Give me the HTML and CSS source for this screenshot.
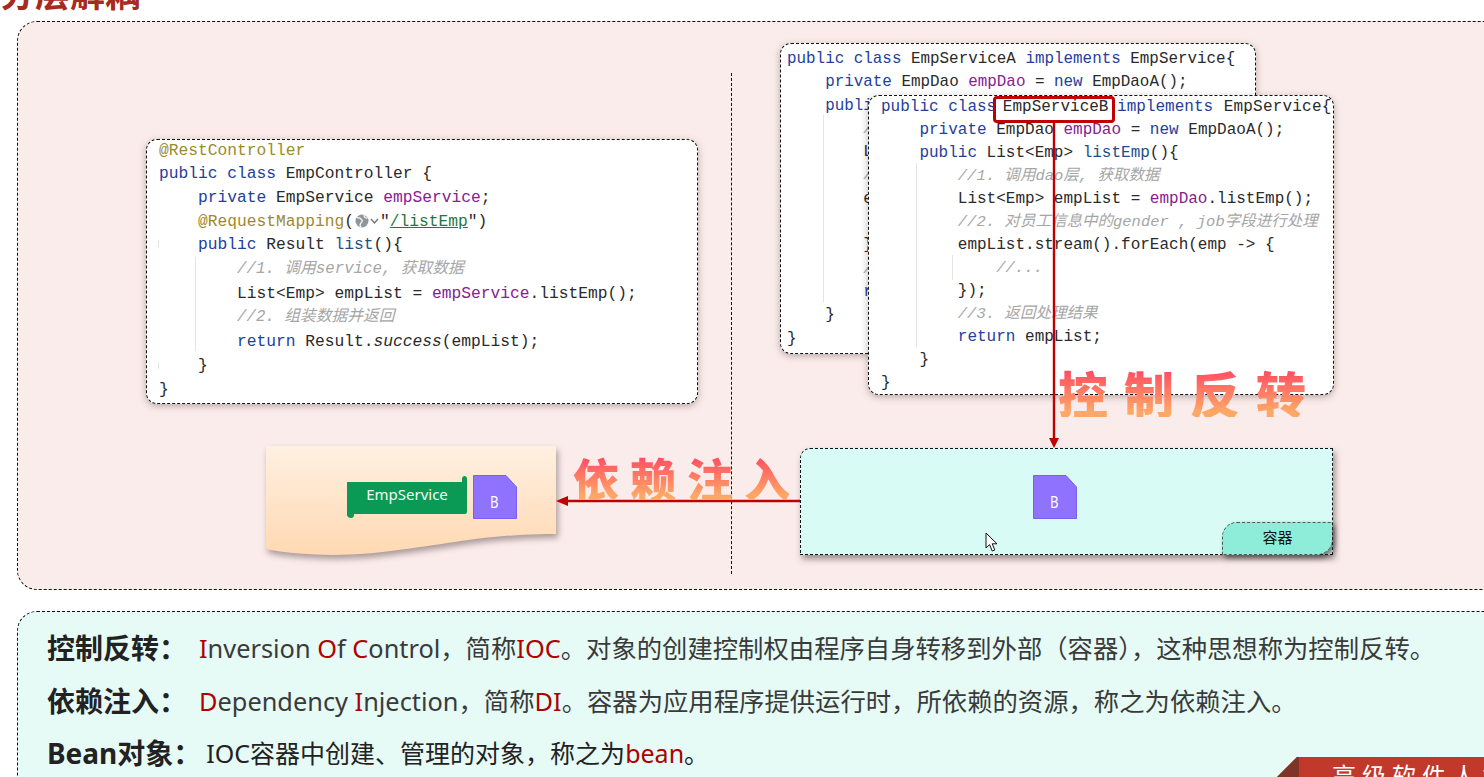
FILE: index.html
```html
<!DOCTYPE html>
<html lang="zh-CN">
<head>
<meta charset="utf-8">
<title>分层解耦</title>
<link rel="stylesheet" href="styles.css">
</head>
<body>
<div class="slide">
  <h1 class="title">分层解耦</h1>

  <section class="stage">
    <div class="divider"></div>

    <div class="card card-left">
<pre class="code code-left"><span class="ann">@RestController</span>
<span class="kw">public class</span> EmpController {
    <span class="kw">private</span> EmpService <span class="fld">empService</span>;
    <span class="ann">@RequestMapping</span>(<svg class="globe" viewBox="0 0 26 14" aria-hidden="true"><circle cx="8" cy="7" r="6.5" fill="#8f959b"/><path d="M3 3.5c2 0 4 1 5 2.500s0 2-1 3-1 3 0 4.500M10 1c0 2 1 3 3.500 3" fill="none" stroke="#eef0f2" stroke-width="1.4"/><path d="M17 5l3.500 4L24 5" fill="none" stroke="#777" stroke-width="1.4"/></svg>"<span class="str">/listEmp</span>")
    <span class="kw">public</span> Result <span class="mth">list</span>(){
        <span class="cmt">//1. 调用service, 获取数据</span>
        List&lt;Emp&gt; empList = <span class="fld">empService</span>.listEmp();
        <span class="cmt">//2. 组装数据并返回</span>
        <span class="kw">return</span> Result.<span class="ita">success</span>(empList);
    }
}</pre>
      <span class="guide guide-l1"></span>
      <span class="guide guide-l2"></span>
      <span class="guide guide-l3"></span>
    </div>

    <div class="card card-a">
<pre class="code code-a"><span class="kw">public class</span> EmpServiceA <span class="kw">implements</span> EmpService{
    <span class="kw">private</span> EmpDao <span class="fld">empDao</span> = <span class="kw">new</span> EmpDaoA();
    <span class="kw">public</span> List&lt;Emp&gt; <span class="mth">listEmp</span>(){
        <span class="cmt">//1. 调用dao层, 获取数据</span>
        List&lt;Emp&gt; empList = <span class="fld">empDao</span>.listEmp();
        <span class="cmt">//2. 对员工信息中的gender , job字段进行处理</span>
        empList.stream().forEach(emp -&gt; {
            <span class="cmt">//...</span>
        });
        <span class="cmt">//3. 返回处理结果</span>
        <span class="kw">return</span> empList;
    }
}</pre>
      <span class="guide guide-a1"></span>
    </div>

    <div class="card card-b">
<pre class="code code-b"><span class="kw">public class</span> <span class="tight-name">EmpServiceB</span> <span class="kw">implements</span> <span class="wide-name">EmpService{</span>
    <span class="kw">private</span> EmpDao <span class="fld">empDao</span> = <span class="kw">new</span> EmpDaoA();
    <span class="kw">public</span> List&lt;Emp&gt; <span class="mth">listEmp</span>(){
        <span class="cmt">//1. 调用dao层, 获取数据</span>
        List&lt;Emp&gt; empList = <span class="fld">empDao</span>.listEmp();
        <span class="cmt">//2. 对员工信息中的gender , job字段进行处理</span>
        empList.stream().forEach(emp -&gt; {
            <span class="cmt">//...</span>
        });
        <span class="cmt">//3. 返回处理结果</span>
        <span class="kw">return</span> empList;
    }
}</pre>
      <span class="guide guide-b1"></span>
      <span class="guide guide-b2"></span>
    </div>

    <div class="highlight"></div>

    <svg class="paper" viewBox="0 0 300 120" aria-hidden="true">
      <defs>
        <linearGradient id="paperFill" x1="0" y1="0" x2="0" y2="1">
          <stop offset="0" stop-color="#fff0e2"/>
          <stop offset="1" stop-color="#ffd9b2"/>
        </linearGradient>
      </defs>
      <path d="M5 5H295V93C225 93 190 103 130 110C95 115 45 116 5 108Z" fill="url(#paperFill)"/>
    </svg>

    <svg class="scroll" viewBox="0 0 122 44">
      <path d="M1 7H116V3a3 3 0 0 1 3-2 3 3 0 0 1 2 3V37a2 2 0 0 1-2 2H8V41a3 3 0 0 1-3 2 4 4 0 0 1-4-3Z" fill="#0b9a55"/>
      <text class="scroll-text" x="61" y="25" text-anchor="middle">EmpService</text>
    </svg>

    <svg class="bean bean-left" viewBox="0 0 44 44">
      <path d="M.5.5H33L43.5 12V43.5H.5Z" fill="#8f73ff" stroke="#7a60ee"/>
      <text class="bean-text" x="17" y="33" textLength="8.5" lengthAdjust="spacingAndGlyphs">B</text>
    </svg>

    <div class="container">
      <div class="container-tab">容器</div>
    </div>

    <svg class="bean bean-right" viewBox="0 0 44 44">
      <path d="M.5.5H33L43.5 12V43.5H.5Z" fill="#8f73ff" stroke="#7a60ee"/>
      <text class="bean-text" x="17" y="33" textLength="8.5" lengthAdjust="spacingAndGlyphs">B</text>
    </svg>

    <svg class="wires" viewBox="0 0 1466 566" aria-hidden="true">
      <path d="M1036 100V418" stroke="#c00000" stroke-width="2.4" fill="none"/>
      <path d="M1031 416H1041L1036 426Z" fill="#c00000"/>
      <path d="M782 479H548" stroke="#c00000" stroke-width="2.4" fill="none"/>
      <path d="M538 479L550 474V484Z" fill="#c00000"/>
    </svg>

    <span class="brush brush-ioc">控制反转</span>
    <span class="brush brush-di">依赖注入</span>

    <svg class="cursor" viewBox="0 0 14 21" aria-hidden="true">
      <path d="M1 1V16L4.600 12.600 7.200 19 9.800 18 7.200 11.800H12Z" fill="#fff" stroke="#111" stroke-width="1"/>
    </svg>
  </section>

  <section class="notes">
    <p class="note"><strong class="term term-wide">控制反转：</strong><span><em>I</em>nversion <em>O</em>f <em>C</em>ontrol，简称<em>IOC</em>。对象的创建控制权由程序自身转移到外部（容器），这种思想称为控制反转。</span></p>
    <p class="note"><strong class="term term-wide">依赖注入：</strong><span><em>D</em>ependency <em>I</em>njection，简称<em>DI</em>。容器为应用程序提供运行时，所依赖的资源，称之为依赖注入。</span></p>
    <p class="note note-dark"><strong class="term term-bean">Bean对象：</strong><span>IOC容器中创建、管理的对象，称之为<em>bean</em>。</span></p>
  </section>

  <div class="brand"><span class="brand-fold"></span><span class="brand-text">高级软件人才培训专家</span></div>
</div>
</body>
</html>
```

FILE: styles.css
```css
* { box-sizing: border-box; }

html, body { margin: 0; padding: 0; background: #fff; }

.slide {
  position: relative;
  display: flex;
  flex-direction: column;
  width: 1484px;
  height: 777px;
  overflow: hidden;
  background: #fff;
  font-family: "Noto Sans", "Noto Sans CJK SC", sans-serif;
}

.title {
  flex: none;
  height: 47px;
  margin: -26px 0 0 0;
  padding: 0;
  font-family: "Noto Sans CJK SC", sans-serif;
  font-size: 35px;
  line-height: 35px;
  font-weight: 700;
  color: #a82a1c;
}

.stage {
  position: relative;
  flex: none;
  width: 1490px;
  height: 569px;
  margin-left: 17px;
  background: #fbecec;
  border: 1px dashed #111;
  border-radius: 20px;
}

.divider {
  position: absolute;
  left: 713px;
  top: 51px;
  height: 501px;
  border-left: 1px dashed #111;
}

.card {
  position: absolute;
  background: #fff;
  border: 1px dashed #111;
  border-radius: 11px;
  box-shadow: 0 2px 7px rgba(60, 40, 40, .35);
  overflow: hidden;
}

.card-left { left: 128px; top: 117px; width: 552px; height: 265px; }
.card-a { left: 762px; top: 21px; width: 476px; height: 311px; }
.card-b { left: 850px; top: 73px; width: 466px; height: 300px; }

.code {
  margin: 0;
  font-family: "Liberation Mono", "Noto Sans CJK SC", monospace;
  color: #2a2a2a;
  white-space: pre;
}

.code-left { margin-top: -1.5px; padding-left: 12px; font-size: 16.25px; line-height: 23.7px; }
.code-a { padding: 4px 0 0 6px; font-size: 15.9px; line-height: 23.3px; }
.code-b { padding-left: 12px; font-size: 16px; line-height: 23px; }

.tight-name { margin-left: -3px; margin-right: -1px; }
.wide-name { margin-left: 1px; letter-spacing: .2px; }

.kw { color: #23409c; }
.fld { color: #87218f; }
.ann { color: #9c8a2c; }
.mth { color: #1d4f86; }
.str { color: #1e7a3c; text-decoration: underline; }
.cmt { color: #a6a6a6; font-style: italic; font-size: .97em; }
.ita { font-style: italic; }

.globe { display: inline-block; width: 26px; height: 14px; vertical-align: -2px; }

.guide { position: absolute; width: 1px; background: #e4e4e4; }
.guide-l1 { left: 48px; top: 117px; height: 94px; }
.guide-l2 { left: 11px; top: 100px; height: 7px; }
.guide-l3 { left: 11px; top: 222px; height: 7px; }
.guide-a1 { left: 42px; top: 71px; height: 187px; }
.guide-b1 { left: 47px; top: 67px; height: 184px; }
.guide-b2 { left: 83px; top: 159px; height: 25px; }

.highlight {
  position: absolute;
  left: 975px;
  top: 74px;
  width: 122px;
  height: 27px;
  border: 3px solid #c00000;
  border-radius: 4px;
}

.paper {
  position: absolute;
  left: 243px;
  top: 419px;
  width: 300px;
  height: 120px;
  filter: drop-shadow(2px 4px 3px rgba(70, 50, 50, .45));
}

.scroll { position: absolute; left: 328px; top: 453px; width: 122px; height: 44px; }
.scroll-text { font-family: "Noto Sans", sans-serif; font-size: 15px; fill: #f2fff8; }

.bean { position: absolute; width: 44px; height: 44px; }
.bean-left { left: 455px; top: 453px; }
.bean-right { left: 1015px; top: 453px; }
.bean-text { font-family: "Noto Sans", sans-serif; font-size: 17px; fill: #fff; }

.container {
  position: absolute;
  left: 782px;
  top: 426px;
  width: 533px;
  height: 107px;
  display: flex;
  justify-content: flex-end;
  align-items: flex-end;
  background: #d9fbf5;
  border: 1px dashed #111;
  border-radius: 10px 0 0 0;
  box-shadow: 2px 4px 6px rgba(60, 40, 40, .5);
}

.container-tab {
  flex: none;
  width: 110px;
  height: 33px;
  margin: 0 0 -1px 0;
  border: 1px dashed #555;
  border-right: 0;
  border-radius: 15px 0 15px 0;
  background: #8eedd9;
  box-shadow: 3px 3px 5px rgba(40, 40, 40, .6);
  font-size: 15px;
  line-height: 28px;
  text-align: center;
  color: #111;
}

.wires { position: absolute; left: 0; top: 0; width: 1466px; height: 566px; pointer-events: none; }

.brush {
  position: absolute;
  font-family: "Noto Sans CJK SC", sans-serif;
  font-weight: 900;
  line-height: 1;
  white-space: nowrap;
  color: transparent;
  background: linear-gradient(180deg, #ff5063 10%, #ffa866 90%);
  -webkit-background-clip: text;
  background-clip: text;
}

.brush-ioc { left: 1040px; top: 345px; font-size: 50px; letter-spacing: 16px; }
.brush-di { left: 555px; top: 432px; font-size: 46px; letter-spacing: 11px; }

.cursor { position: absolute; left: 967px; top: 510px; width: 14px; height: 21px; }

.notes {
  flex: none;
  width: 1490px;
  height: 190px;
  margin: 21px 0 0 17px;
  padding: 10px 0 0 29px;
  background: #e6faf6;
  border: 1px dashed #111;
  border-radius: 20px;
}

.note {
  margin: 0;
  height: 52.5px;
  display: flex;
  align-items: center;
  font-size: 25.35px;
  line-height: 36px;
  color: #3a3a3a;
  white-space: nowrap;
}

.note-dark { color: #222; font-size: 25px; }
.note em { font-style: normal; color: #b00000; }

.term { font-size: 28px; font-weight: 700; color: #222; }
.term-wide { width: 152px; flex: none; }
.term-bean { margin-right: 5px; }

.brand {
  position: absolute;
  left: 1277px;
  top: 757px;
  width: 207px;
  height: 20px;
  display: flex;
  background: #c0392b;
  overflow: hidden;
  clip-path: polygon(20px 0, 100% 0, 100% 100%, 0 100%);
}

.brand-fold { flex: none; width: 22px; background: #7e3427; }

.brand-text {
  margin-left: 33px;
  font-family: "Noto Sans CJK SC", sans-serif;
  font-size: 24px;
  line-height: 36px;
  letter-spacing: 6px;
  color: #fff;
  white-space: nowrap;
}
```
